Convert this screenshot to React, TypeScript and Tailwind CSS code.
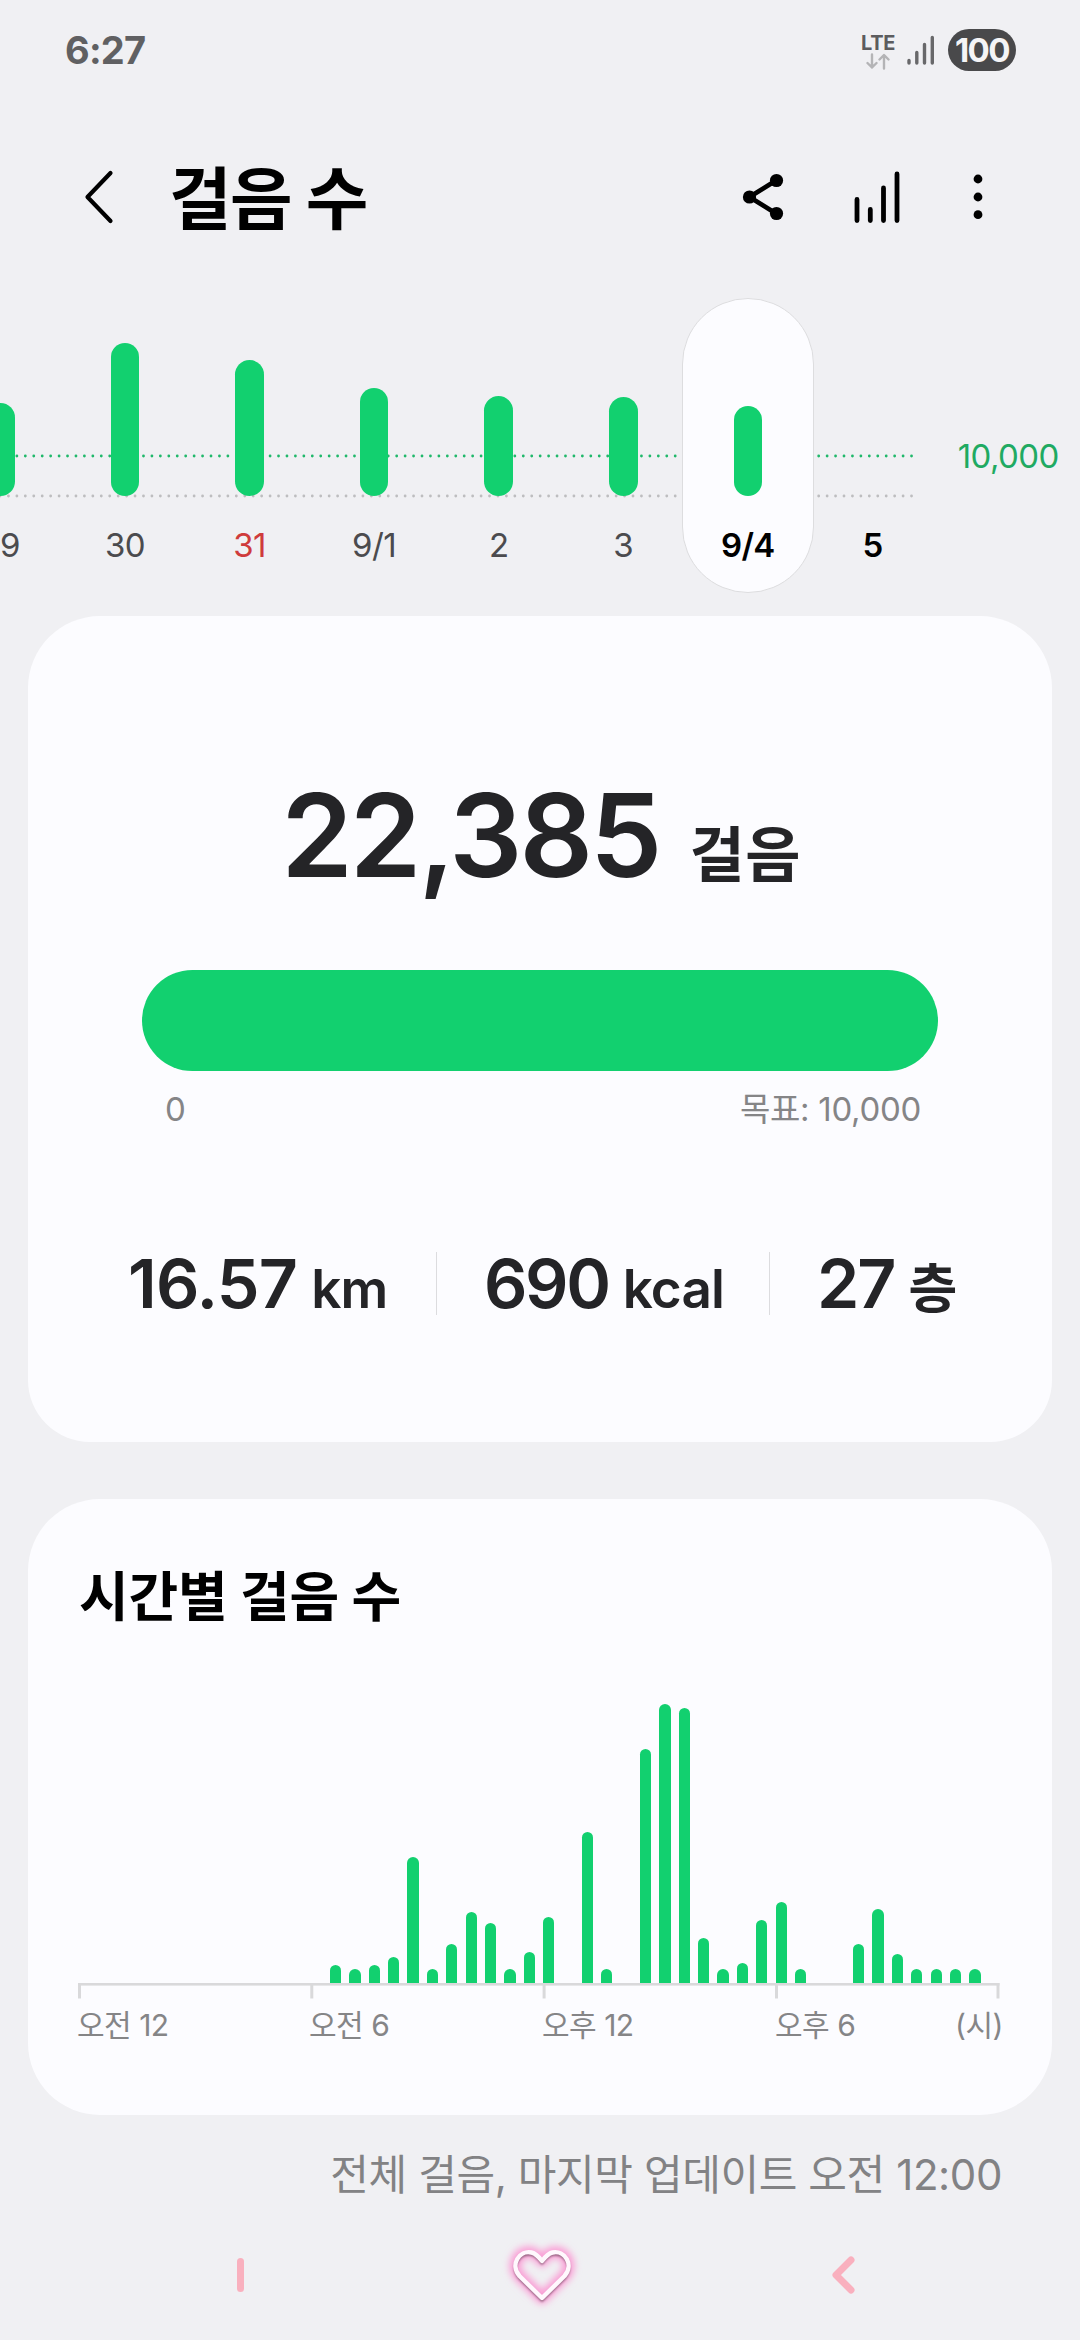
import React from 'react';

const days = [
    { label: "29", height: 93, tone: "text-[#4b4b4e]" },
    { label: "30", height: 153, tone: "text-[#4b4b4e]" },
    { label: "31", height: 136, tone: "text-[#cf3b3b]" },
    { label: "9/1", height: 108.5, tone: "text-[#4b4b4e]" },
    { label: "2", height: 100.5, tone: "text-[#4b4b4e]" },
    { label: "3", height: 99, tone: "text-[#4b4b4e]" },
    { label: "9/4", height: 90, tone: "text-black font-semibold", selected: true },
    { label: "5", height: 0, tone: "text-black font-semibold" },
];

// One entry per half hour, starting at midnight
const halfHours = [
    0, 0, 0, 0, 0, 0, 0, 0, 0, 0, 0, 0,
    0, 18, 14, 18.5, 26.5, 126, 14, 39, 71, 60, 14, 31,
    66.5, 0, 151, 14, 0, 234.5, 279.5, 275.5, 45.5, 14, 20, 63.5,
    81.5, 14, 0, 0, 39, 74, 29, 14, 14, 14, 14,
];

const ticks = [0, 232.3, 464.6, 697, 918.5];

const heart = "M42 65 19.5 43c-10-11.5 0-26 12-23.5 4.5 1 7.5 4.5 10.5 8.5 3-4 6-7.5 10.5-8.5 12-2.5 22 12 12 23.500Z";

function StatusBar() {
    return (
        <div className="flex h-[100px] items-center justify-between pl-[65px] pr-[64px]">
            <span className="text-[38px] font-bold leading-none tracking-[-0.8px] text-[#606062]">6:27</span>
            <div className="flex items-center">
                <div className="flex w-[34px] flex-col items-center pt-0.5 text-[#5c5c5e]">
                    <span className="text-[20px] font-bold leading-[20px] tracking-[-0.3px]">LTE</span>
                    <svg width="24" height="17" viewBox="0 0 24 17" fill="none" stroke="#b4b4b6" strokeWidth="2.4" strokeLinecap="round" strokeLinejoin="round">
                        <path d="M6 1.5v13M1.5 10 6 14.5l4.5-4.5M18 15.5v-13M13.5 6.5 18 2l4.5 4.5" />
                    </svg>
                </div>
                <svg className="ml-[12px]" width="28" height="30" viewBox="0 0 28 30" stroke="#68686a" strokeWidth="3.4" strokeLinecap="round">
                    <path d="M2 25.5V28M9.8 17.5V28M17.5 9.5V28M25.3 2.5V28" />
                </svg>
                <div className="ml-[13px] flex h-[42px] w-[68px] items-center justify-center rounded-full bg-[#49494b]">
                    <span className="text-[33px] font-bold leading-none tracking-[-1.5px] text-[#f4f4f6]">100</span>
                </div>
            </div>
        </div>
    );
}

function Header() {
    return (
        <header className="flex h-[198px] items-start pt-[69px] pl-[84px]">
            <svg width="32" height="56" viewBox="0 0 32 56" fill="none" stroke="black" strokeWidth="4.2" strokeLinecap="round" strokeLinejoin="round">
                <path d="M26.5 4 3.500 28l23 24" />
            </svg>
            <h1 className="ml-[53px] mt-px w-[400px] whitespace-nowrap text-[68px] font-bold leading-[58px] tracking-[-1.5px] text-black">걸음 수</h1>
            <svg className="ml-[172px] mt-[2px]" width="44" height="52" viewBox="0 0 44 52">
                <path d="M35 9.5 8.5 26 35 42.5" fill="none" stroke="black" strokeWidth="4.8" />
                <circle cx="35.5" cy="9.5" r="6.6" />
                <circle cx="8.5" cy="26" r="6.6" />
                <circle cx="35.5" cy="42.5" r="6.6" />
            </svg>
            <svg className="ml-[69px]" width="48" height="56" viewBox="0 0 48 56" stroke="black" strokeWidth="4.8" strokeLinecap="round">
                <path d="M3 30.500v21M16.300 40.500v11M29.500 19v32.500M43 5v46.500" />
            </svg>
            <svg className="ml-[68px] mt-[3px]" width="20" height="50" viewBox="0 0 20 50">
                <circle cx="8" cy="7" r="4.4" />
                <circle cx="8" cy="25" r="4.4" />
                <circle cx="8" cy="42.7" r="4.4" />
            </svg>
        </header>
    );
}

function DayStrip() {
    return (
        <section className="relative h-[318px] overflow-hidden">
            {/* Goal line and baseline run behind the bars */}
            <svg className="absolute left-0 top-0" width="920" height="210" fill="none" strokeLinecap="round" strokeWidth="2.8">
                <path d="M0 158H913" stroke="#1fb86a" strokeDasharray="0.01 8.43" />
                <path d="M0 198H913" stroke="#bdbdbf" strokeDasharray="0.01 8.43" />
            </svg>
            <div className="relative -ml-[62px] flex">
                {days.map((day) => (
                    <div key={day.label} className="relative flex h-[295px] w-[124.6px] shrink-0 flex-col items-center">
                        {day.selected && (
                            <div className="absolute -inset-x-[4px] inset-y-0 rounded-full border border-[#dddddf] bg-[#fcfcff]" />
                        )}
                        <div className="relative flex h-[198px] items-end">
                            <div className="w-[28.6px] rounded-full bg-[#12d06f]" style={{ height: day.height }} />
                        </div>
                        <span className={`relative mt-[33px] text-[33px] leading-[33px] tracking-[-0.6px] ${day.tone}`}>{day.label}</span>
                    </div>
                ))}
                <span className="ml-[23px] mt-[142px] text-[33px] leading-[33px] tracking-[-0.6px] text-[#1faa62]">10,000</span>
            </div>
        </section>
    );
}

function Stat({ value, unit, className }: { value: string, unit: string, className: string }) {
    return (
        <div className={`flex shrink-0 items-baseline whitespace-nowrap font-semibold text-[#242427] ${className}`}>
            <span className="text-[68px] leading-none">{value}</span>
            <span className="ml-[14px] text-[53px] leading-none tracking-[-0.8px]">{unit}</span>
        </div>
    );
}

function SummaryCard() {
    return (
        <section className="mx-[28px] h-[826px] rounded-t-[72px] rounded-b-[62px] bg-[#fcfcff] px-[114px] pt-[162px]">
            <div className="flex items-baseline justify-center whitespace-nowrap pl-[2px] text-[#242427]">
                <span className="text-[115px] font-semibold leading-[115px] tracking-[-3px]">22,385</span>
                <span className="ml-[30px] text-[60px] font-semibold leading-none tracking-[0.5px]">걸음</span>
            </div>
            <div className="mt-[77px] h-[101px] rounded-full bg-[#12d06f]" />
            <div className="mt-[21px] flex justify-between pl-[23px] pr-[17px] text-[33px] leading-[34px] tracking-[-0.3px] text-[#858587]">
                <span>0</span>
                <span>목표: 10,000</span>
            </div>
            <div className="-mx-[14px] mt-[123px] flex items-center">
                <Stat value="16.57" unit="km" className="w-[308px] tracking-[-0.8px]" />
                <div className="mr-[47px] h-[63px] w-px shrink-0 bg-[#dcdcdf]" />
                <Stat value="690" unit="kcal" className="w-[285px] tracking-[-2.4px]" />
                <div className="mr-[47px] h-[63px] w-px shrink-0 bg-[#dcdcdf]" />
                <Stat value="27" unit="층" className="tracking-[-2px]" />
            </div>
        </section>
    );
}

function HourlyCard() {
    return (
        <section className="mx-[28px] mt-[57px] h-[616px] rounded-[72px] bg-[#fcfcff] px-[50px] pt-[69px]">
            <h2 className="ml-px whitespace-nowrap text-[54px] font-bold leading-[60px] tracking-[-0.2px] text-black">시간별 걸음 수</h2>
            <div className="mt-[55px] flex h-[300px] items-end gap-[8.08px]">
                {halfHours.map((height, index) => (
                    <div key={index} className="w-[11.3px] shrink-0 rounded-t-full bg-[#12d06f]" style={{ height }} />
                ))}
            </div>
            <svg className="block" width="924" height="16" fill="#d9d9db">
                <rect width="921.5" height="2.6" />
                {ticks.map((x) => (
                    <rect key={x} x={x} width="3" height="15.5" />
                ))}
            </svg>
            <div className="-ml-px mt-[9px] flex whitespace-nowrap text-[30px] leading-[34px] tracking-[-0.5px] text-[#858587]">
                <span className="w-[232px]">오전 12</span>
                <span className="w-[233px]">오전 6</span>
                <span className="w-[233px]">오후 12</span>
                <span>오후 6</span>
                <span className="-mr-px ml-auto">(시)</span>
            </div>
        </section>
    );
}

function NavBar() {
    return (
        <nav className="flex h-[120px] items-center pl-[237px]">
            <div className="h-[34px] w-[7px] rounded-full bg-[#f9b0be]" />
            <svg className="ml-[256px]" width="84" height="84" viewBox="0 0 84 84" fill="none" strokeLinejoin="round">
                <defs>
                    <filter id="glow" x="-30%" y="-30%" width="160%" height="160%">
                        <feGaussianBlur stdDeviation="3.5" />
                    </filter>
                    <filter id="shade" x="-30%" y="-30%" width="160%" height="160%">
                        <feGaussianBlur stdDeviation="0.8" />
                    </filter>
                </defs>
                <path d={heart} stroke="#fa9fd6" strokeWidth="12" filter="url(#glow)" />
                <path d={heart} transform="translate(0 2)" stroke="#8f5f7c" strokeWidth="3.2" filter="url(#shade)" />
                <path d={heart} stroke="#fff8fd" strokeWidth="4.4" />
            </svg>
            <svg className="ml-[246px]" width="28" height="42" viewBox="0 0 28 42" fill="none" stroke="#f9b0be" strokeWidth="7" strokeLinecap="round" strokeLinejoin="round">
                <path d="M21 6 6 21l15 15" />
            </svg>
        </nav>
    );
}

export default function App() {
    return (
        <div className="h-[2340px] w-[1080px] overflow-hidden bg-[#f0f0f3] font-['Inter','Noto_Sans_CJK_KR',sans-serif]">
            <StatusBar />
            <Header />
            <DayStrip />
            <SummaryCard />
            <HourlyCard />
            <p className="mt-[35px] h-[65px] whitespace-nowrap pr-[78px] text-right text-[42px] leading-[50px] tracking-[-0.4px] text-[#828284]">
                전체 걸음, 마지막 업데이트 오전 12:00
            </p>
            <NavBar />
        </div>
    );
}
